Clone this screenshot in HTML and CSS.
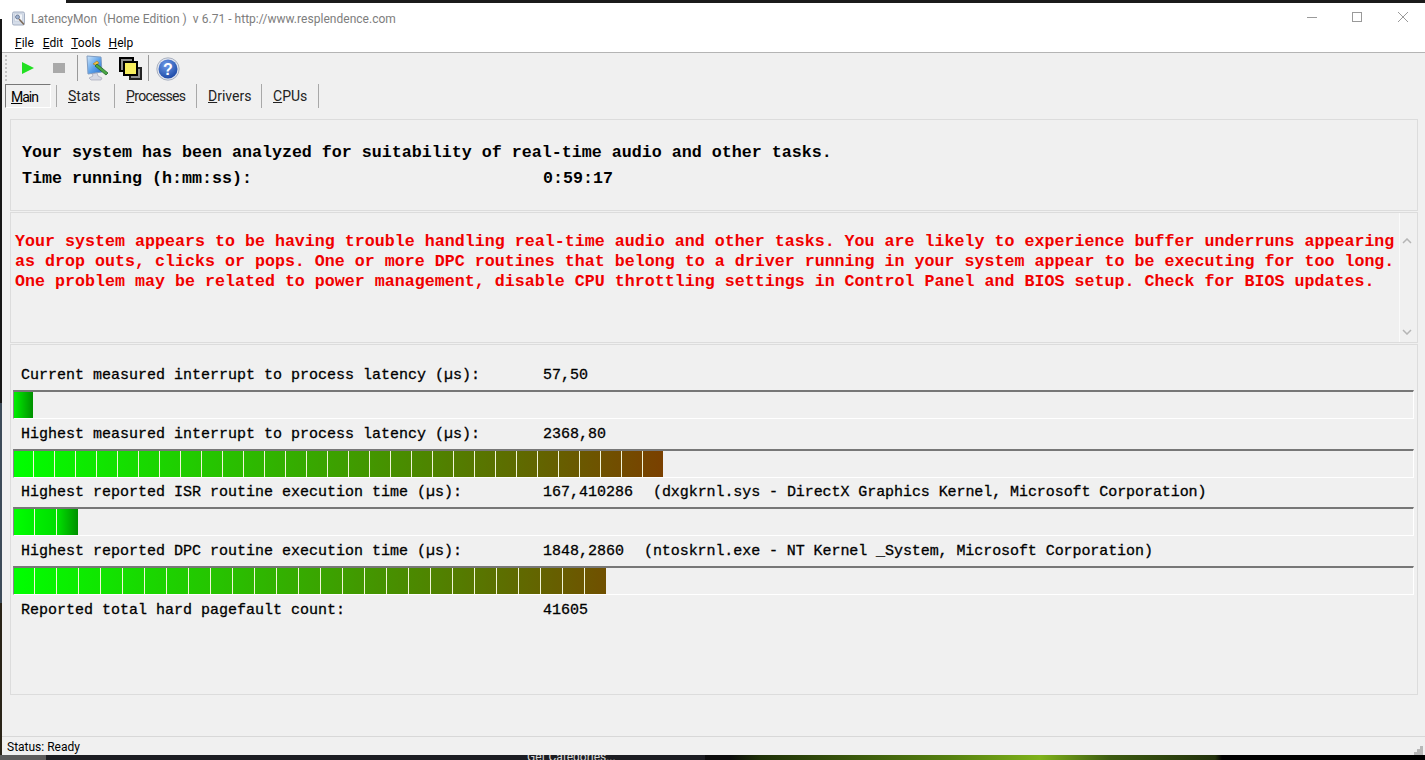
FILE: index.html
```html
<!DOCTYPE html>
<html lang="en">
<head>
<meta charset="utf-8">
<title>LatencyMon</title>
<link rel="stylesheet" href="styles.css">
</head>
<body>
<div class="desktop-top"></div>
<div class="desktop-middle">
  <div class="desktop-left"></div>
  <div class="window">
    <header class="titlebar">
      <svg class="app-icon" viewBox="0 0 16 16" width="16" height="16">
        <rect x="1.500" y="1" width="12" height="13" rx="1.500" fill="#d5dde9" stroke="#a4afc2"/>
        <rect x="3.500" y="3" width="8" height="7" fill="#f2f5fa" stroke="#b9c3d3" stroke-width=".5"/>
        <circle cx="6.500" cy="6" r="2" fill="#9fb2d0" stroke="#5f6f8a" stroke-width=".8"/>
        <path d="M8 8l5 5.500" stroke="#7c6a58" stroke-width="1.600"/>
      </svg>
      <div class="title-text">LatencyMon&nbsp; (Home Edition )&nbsp; v 6.71 - http://www.resplendence.com</div>
      <div class="win-controls">
        <svg class="win-btn" viewBox="0 0 46 12" width="46" height="12"><path d="M20 5.500h10" stroke="#9a9a9a"/></svg>
        <svg class="win-btn" viewBox="0 0 46 12" width="46" height="12"><rect x="19.500" y=".5" width="9" height="9" fill="none" stroke="#9a9a9a"/></svg>
        <svg class="win-btn" viewBox="0 0 46 12" width="46" height="12"><path d="M19 0l10 10M29 0L19 10" stroke="#9a9a9a"/></svg>
      </div>
    </header>
    <nav class="menubar">
      <span class="menu-item menu-file"><u>F</u>ile</span>
      <span class="menu-item"><u>E</u>dit</span>
      <span class="menu-item"><u>T</u>ools</span>
      <span class="menu-item"><u>H</u>elp</span>
    </nav>
    <div class="toolbar">
      <div class="gripper"></div>
      <svg class="tool tool-play" viewBox="0 0 12 12" width="12" height="12"><path d="M0 0l12 6-12 6z" fill="#22e022"/></svg>
      <svg class="tool tool-stop" viewBox="0 0 12 10" width="12" height="10"><rect width="12" height="10" fill="#a9a9a9"/></svg>
      <div class="tool-sep first"></div>
      <svg class="tool tool-monitor" viewBox="0 0 26 26" width="26" height="26">
        <defs><linearGradient id="screen" x1="0" y1="0" x2="1" y2="1"><stop offset="0" stop-color="#cfe6fa"/><stop offset=".55" stop-color="#5aa0ea"/><stop offset="1" stop-color="#2a6ccc"/></linearGradient></defs>
        <path d="M2 1l14 1 1 15-14 2z" fill="url(#screen)" stroke="#7f9cc2"/>
        <path d="M7 19l5-1 1 3 4 2-1 2H6l-2-2 4-2z" fill="#d6d8e4" stroke="#9a9db4" stroke-width=".6"/>
        <path d="M8 9l4-3 2 2-3 2z" fill="#f0c040" stroke="#a06a10" stroke-width=".5"/>
        <path d="M12 9l11 9-2 2-11-9z" fill="#4aa845" stroke="#24662a" stroke-width=".8"/>
      </svg>
      <svg class="tool tool-windows" viewBox="0 0 23 23" width="23" height="23">
        <rect x="1" y="1" width="13" height="13" fill="#8e8e8e" stroke="#000" stroke-width="2"/>
        <rect x="11" y="11" width="11" height="11" fill="#8e8e8e" stroke="#222" stroke-width="2"/>
        <rect x="5" y="5" width="13" height="13" fill="#f7ee5f" stroke="#000" stroke-width="2"/>
      </svg>
      <div class="tool-sep second"></div>
      <svg class="tool tool-help" viewBox="0 0 24 24" width="24" height="24">
        <defs><radialGradient id="ball" cx=".4" cy=".3" r=".8"><stop offset="0" stop-color="#6d9be8"/><stop offset="1" stop-color="#1440a0"/></radialGradient></defs>
        <circle cx="12" cy="12" r="11.200" fill="#dfe4ee" stroke="#9aa3b5" stroke-width=".8"/>
        <circle cx="12" cy="12" r="9.500" fill="url(#ball)"/>
        <text x="12" y="18" text-anchor="middle" class="help-mark">?</text>
      </svg>
    </div>
    <div class="tabs">
      <span class="tab active"><u>M</u>ain</span>
      <span class="tab tab-stats"><u>S</u>tats</span>
      <span class="tab tab-processes"><u>P</u>rocesses</span>
      <span class="tab tab-drivers"><u>D</u>rivers</span>
      <span class="tab tab-cpus"><u>C</u>PUs</span>
    </div>
    <main class="content">
      <section class="panel panel-summary">
        <p class="summary-line">Your system has been analyzed for suitability of real-time audio and other tasks.</p>
        <p class="summary-line time-line"><span class="time-label">Time running (h:mm:ss):</span><span>0:59:17</span></p>
      </section>
      <section class="panel panel-verdict">
        <p class="verdict">Your system appears to be having trouble handling real-time audio and other tasks. You are likely to experience buffer underruns appearing as drop outs, clicks or pops. One or more DPC routines that belong to a driver running in your system appear to be executing for too long. One problem may be related to power management, disable CPU throttling settings in Control Panel and BIOS setup. Check for BIOS updates.</p>
        <div class="scrollbar">
          <svg viewBox="0 0 10 6" width="10" height="6"><path d="M1 5l4-4 4 4" fill="none" stroke="#b5b5b5" stroke-width="1.500"/></svg>
          <svg viewBox="0 0 10 6" width="10" height="6"><path d="M1 1l4 4 4-4" fill="none" stroke="#b5b5b5" stroke-width="1.500"/></svg>
        </div>
      </section>
      <section class="panel panel-metrics">
        <div class="metric">
          <div class="metric-line"><span class="metric-label">Current measured interrupt to process latency (µs):</span><span>57,50</span></div>
          <div class="track"><div class="fill fill-small" style="width:19px"></div></div>
        </div>
        <div class="metric">
          <div class="metric-line"><span class="metric-label">Highest measured interrupt to process latency (µs):</span><span>2368,80</span></div>
          <div class="track"><div class="fill fill-long seg-21" style="width:649px"></div></div>
        </div>
        <div class="metric">
          <div class="metric-line"><span class="metric-label">Highest reported ISR routine execution time (µs):</span><span>167,410286</span><span class="metric-note">(dxgkrnl.sys - DirectX Graphics Kernel, Microsoft Corporation)</span></div>
          <div class="track"><div class="fill fill-short seg-22" style="width:64px"></div></div>
        </div>
        <div class="metric">
          <div class="metric-line"><span class="metric-label">Highest reported DPC routine execution time (µs):</span><span>1848,2860</span><span class="metric-note">(ntoskrnl.exe - NT Kernel _System, Microsoft Corporation)</span></div>
          <div class="track"><div class="fill fill-long seg-22" style="width:592px"></div></div>
        </div>
        <div class="metric">
          <div class="metric-line"><span class="metric-label">Reported total hard pagefault count:</span><span>41605</span></div>
        </div>
      </section>
    </main>
    <footer class="statusbar">
      <span>Status: Ready</span>
      <svg class="grip" viewBox="0 0 9 9" width="9" height="9"><path d="M6 0h3v3H6zM3 3h3v3H3zM6 3h3v3H6zM0 6h3v3H0zM3 6h3v3H3zM6 6h3v3H6z" fill="#b8b8b8"/></svg>
    </footer>
  </div>
</div>
<div class="desktop-bottom"><span class="behind-text">Get Categories...</span></div>
</body>
</html>
```

FILE: styles.css
```css
* { box-sizing: border-box; }
html, body { margin: 0; height: 760px; overflow: hidden; }
body {
  display: flex;
  flex-direction: column;
  background: #000;
  font-family: "Roboto", "Liberation Sans", sans-serif;
  color: #000;
}
p { margin: 0; }

.desktop-top {
  height: 3px;
  flex: none;
  background: linear-gradient(90deg, #fff 0 66px, #1b1b1b 66px 100%);
}
.desktop-middle { height: 752px; flex: none; display: flex; }
.desktop-left {
  width: 2px;
  flex: none;
  background: linear-gradient(180deg, #fff 0 16px, #161616 16px 400px, #3c4a58 400px 600px, #2a2418 600px 100%);
}
.desktop-bottom {
  height: 5px;
  flex: none;
  position: relative;
  overflow: hidden;
  line-height: 2px;
  background: linear-gradient(90deg, #5c5c5c 0 46px, #1c1d22 46px 705px, #0c0c0c 705px 730px, #1f3008 760px, #55800f 950px, #7fb21a 1040px, #3c5a10 1110px, #22300c 1215px, #000 1222px 100%);
}
.behind-text { margin-left: 527px; font-size: 12px; color: #d8d8d8; }

.window {
  flex: 1;
  min-width: 0;
  display: flex;
  flex-direction: column;
  background: #f0f0f0;
}

.titlebar {
  height: 31px;
  flex: none;
  display: flex;
  align-items: center;
  background: #fff;
  padding-left: 9px;
}
.app-icon { flex: none; margin-right: 4px; }
.title-text { flex: 1; font-size: 12px; color: #7d7d7d; letter-spacing: .03px; }
.win-controls { display: flex; flex: none; margin-bottom: 1px; }
.win-btn { display: block; }

.menubar {
  height: 19px;
  flex: none;
  display: flex;
  align-items: center;
  background: #fff;
  border-bottom: 1px solid #b4b4b4;
  padding-left: 13px;
  padding-bottom: 1px;
  font-size: 12px;
}
.menu-item { margin-right: 8px; }
.menu-file { margin-right: 9px; }

.toolbar {
  height: 30px;
  flex: none;
  display: flex;
  align-items: center;
  position: relative;
  padding-left: 20px;
}
.gripper {
  position: absolute;
  left: 3px;
  top: 2px;
  width: 2px;
  height: 26px;
  background: repeating-linear-gradient(180deg, #c4c4c4 0 2px, transparent 2px 4px);
}
.tool { flex: none; display: block; }
.tool-play { margin-right: 19px; }
.tool-stop { margin-right: 12px; }
.tool-sep { width: 1px; height: 26px; background: #9a9a9a; flex: none; }
.tool-sep.first { margin-right: 7px; }
.tool-monitor { margin-right: 8px; }
.tool-windows { margin-right: 6px; }
.tool-sep.second { margin-right: 7px; }
.tool-help { margin-top: 2px; }
.help-mark { font: bold 16px "Liberation Sans", sans-serif; fill: #fff; }

.tabs {
  height: 24px;
  margin-top: 1px;
  flex: none;
  display: flex;
  font-size: 14px;
  padding-left: 3px;
}
.tab {
  display: flex;
  align-items: center;
  padding: 0 0 1px 11px;
  border-right: 1px solid #a8a8a8;
  color: #222;
  flex: none;
}
.tab-stats { width: 58px; }
.tab-processes { width: 82px; letter-spacing: -.65px; }
.tab-drivers { width: 65px; }
.tab-cpus { width: 57px; }
.tab.active {
  width: 46px;
  padding: 1px 0 0 5px;
  margin-right: 6px;
  border: 1px solid;
  border-color: #777 #fff #fff #777;
  color: #000;
  letter-spacing: -1px;
  position: relative;
}
.tab.active::after {
  content: "";
  position: absolute;
  top: 0;
  bottom: 0;
  right: -7px;
  width: 1px;
  background: #a8a8a8;
}

.content {
  flex: 1;
  min-height: 0;
  padding: 11px 7px 0 8px;
  display: flex;
  flex-direction: column;
  gap: 1px;
}
.panel {
  flex: none;
  border: 1px solid #dcdcdc;
  font-family: "Liberation Mono", monospace;
  font-weight: bold;
}
.panel-summary { height: 92px; padding: 20px 11px 0; font-size: 16.67px; }
.summary-line { height: 26px; line-height: 26px; white-space: pre; }
.time-line { display: flex; }
.time-label { width: 521px; flex: none; }

.panel-verdict { height: 131px; display: flex; }
.verdict {
  flex: 1;
  padding: 19px 0 0 4px;
  font-size: 16.67px;
  line-height: 20px;
  color: #f00000;
  border-right: 1px solid #fafafa;
}
.scrollbar {
  width: 17px;
  flex: none;
  display: flex;
  flex-direction: column;
  justify-content: space-between;
  align-items: center;
  padding: 25px 3px 7px 0;
}
.scrollbar svg { display: block; }

.panel-metrics {
  height: 351px;
  padding: 15.8px 2px 0;
  font-size: 15px;
  font-weight: normal;
  -webkit-text-stroke: .3px #000;
  color: #000;
}
.metric { height: 58.75px; }
.metric-line { height: 29px; padding-left: 8px; display: flex; white-space: pre; line-height: 30px; }
.metric-label { width: 522px; flex: none; }
.metric-note { margin-left: 20px; letter-spacing: -.075px; }
.track {
  height: 29px;
  border-top: 2px solid #777;
  border-left: 1px solid #888;
  border-bottom: 1px solid #fff;
  border-right: 1px solid #fff;
  width: 1401px;
}
.fill { height: 26px; }
.fill-small { background: linear-gradient(90deg, #00f000, #009000); }
.seg-21, .seg-22 { background-repeat: repeat-x, no-repeat; }
.fill-long.seg-21 {
  background-image: linear-gradient(90deg, transparent 20px, #f2f5d8 20px), linear-gradient(90deg, #00ff00, #7a4000);
  background-size: 21px 100%, 100% 100%;
  background-position: -1px 0, 0 0;
}
.fill-long.seg-22 {
  background-image: linear-gradient(90deg, transparent 21px, #f2f5d8 21px), linear-gradient(90deg, #00ff00, #705000);
  background-size: 22px 100%, 100% 100%;
  background-position: -1px 0, 0 0;
}
.fill-short.seg-22 {
  background-image: linear-gradient(90deg, transparent 21px, #f2f5d8 21px), linear-gradient(90deg, #00ff00, #00dc00 70%, #009000);
  background-size: 22px 100%, 100% 100%;
  background-position: -1px 0, 0 0;
}

.statusbar {
  height: 19px;
  flex: none;
  border-top: 1px solid #d8d8d8;
  padding: 1px 2px 0 5px;
  display: flex;
  align-items: center;
  justify-content: space-between;
  font-size: 12px;
}
.grip { align-self: flex-end; }
```
